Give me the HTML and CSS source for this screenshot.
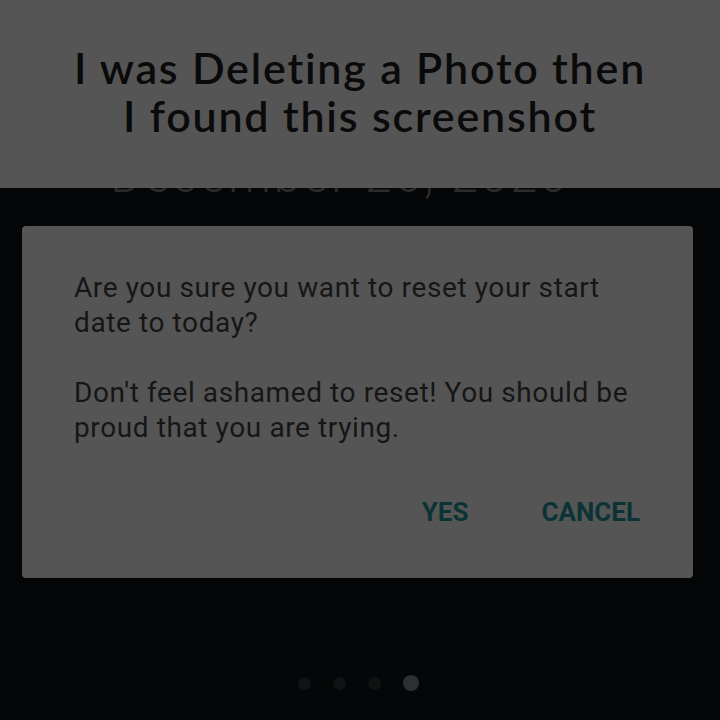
FILE: index.html
```html
<!DOCTYPE html>
<html>
<head>
<meta charset="utf-8">
<link rel="stylesheet" href="styles.css">
</head>
<body>
<div class="screen">
  <header class="caption">
    <p class="caption-text">I was Deleting a Photo then<br>I found this screenshot</p>
  </header>
  <div class="date-clip"><span class="date">December 26, 2020</span></div>
  <section class="dialog">
    <div class="dialog-body">
      <p>Are you sure you want to reset your start date to today?</p>
      <p>Don't feel ashamed to reset! You should be proud that you are trying.</p>
    </div>
    <div class="dialog-actions">
      <span class="btn">YES</span>
      <span class="btn">CANCEL</span>
    </div>
  </section>
  <div class="dots">
    <span class="dot"></span>
    <span class="dot"></span>
    <span class="dot"></span>
    <span class="dot dot-active"></span>
  </div>
</div>
</body>
</html>
```

FILE: styles.css
```css
html, body {
  margin: 0;
  padding: 0;
  background: #050607;
}
.screen {
  width: 720px;
  height: 720px;
  overflow: hidden;
  display: flex;
  flex-direction: column;
  background: #050607;
}
.caption {
  height: 188px;
  background: #555555;
  display: flex;
  justify-content: center;
  box-sizing: border-box;
  padding-top: 44px;
  flex-shrink: 0;
}
.caption-text {
  margin: 0;
  font-family: Lato, "Noto Sans", sans-serif;
  font-weight: 600;
  font-size: 43px;
  line-height: 48px;
  letter-spacing: 1.8px;
  color: #0a0a0a;
  text-align: center;
}
.date-clip {
  height: 38px;
  overflow: hidden;
  display: flex;
  align-items: flex-start;
  justify-content: center;
  padding-right: 40px;
  flex-shrink: 0;
}
.date {
  display: block;
  font-family: Roboto, sans-serif;
  font-weight: 300;
  font-size: 48px;
  line-height: 62px;
  letter-spacing: 3px;
  color: #2b2b2b;
  white-space: nowrap;
  margin-top: -43px;
}
.dialog {
  margin: 0 27px 0 22px;
  height: 352px;
  background: #555555;
  border-radius: 4px;
  box-sizing: border-box;
  padding: 0 52px;
  display: flex;
  flex-direction: column;
  flex-shrink: 0;
}
.dialog-body {
  padding-top: 44px;
  font-family: Roboto, sans-serif;
  font-size: 28px;
  line-height: 35px;
  letter-spacing: 0.6px;
  color: #161616;
}
.dialog-body p {
  margin: 0 0 35px 0;
}
.dialog-body p:last-child {
  margin-bottom: 0;
}
.dialog-actions {
  display: flex;
  justify-content: flex-end;
  gap: 73px;
  margin-top: 52px;
  padding-right: 1px;
}
.btn {
  font-family: Roboto, sans-serif;
  font-weight: 700;
  font-size: 26px;
  line-height: 30px;
  color: #0b3335;
}
.dots {
  margin-top: 97px;
  display: flex;
  justify-content: center;
  align-items: center;
  gap: 22px;
  padding-right: 3px;
}
.dot {
  width: 13px;
  height: 13px;
  border-radius: 50%;
  background: #111213;
}
.dot-active {
  width: 16px;
  height: 16px;
  background: #2e2f30;
}
```
